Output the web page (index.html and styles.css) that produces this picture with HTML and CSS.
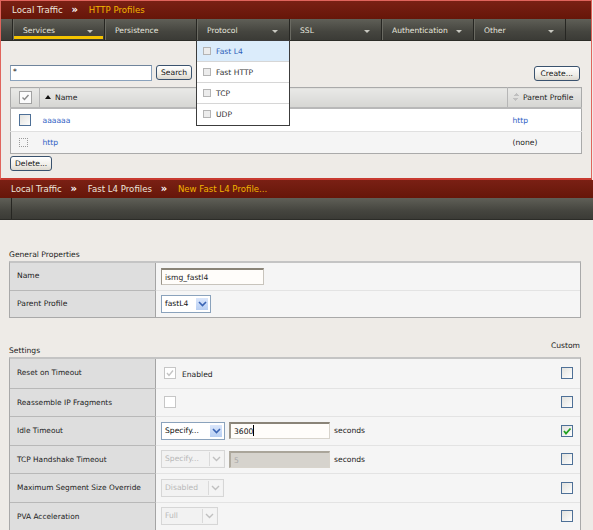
FILE: index.html
```html
<!DOCTYPE html>
<html>
<head>
  <title>Local Traffic - Profiles</title>
  <link rel="stylesheet" href="styles.css">
</head>
<body>
  <div class="screen list-screen">
    <div class="crumbs">Local Traffic <span class="crumb-sep">&raquo;</span> <span class="crumb-current">HTTP Profiles</span></div>
    <div class="tabs">
      <div class="tab-edge"></div>
      <div class="tab active">Services <span class="caret"></span></div>
      <div class="tab">Persistence</div>
      <div class="tab open">Protocol <span class="caret"></span>
        <ul class="menu">
          <li class="menu-item hover"><span class="menu-box"></span>Fast L4</li>
          <li class="menu-item"><span class="menu-box"></span>Fast HTTP</li>
          <li class="menu-item"><span class="menu-box"></span>TCP</li>
          <li class="menu-item"><span class="menu-box"></span>UDP</li>
        </ul>
      </div>
      <div class="tab">SSL <span class="caret"></span></div>
      <div class="tab">Authentication <span class="caret"></span></div>
      <div class="tab">Other <span class="caret"></span></div>
      <div class="tab-fill"></div>
    </div>

    <div class="list-body">
      <div class="toolbar">
        <span class="text-input search-input">*</span>
        <span class="btn">Search</span>
        <span class="spacer"></span>
        <span class="btn">Create...</span>
      </div>
      <table class="grid">
        <thead>
          <tr>
            <th class="col-check"><span class="cb cb-head">
              <svg width="9" height="9" viewBox="0 0 9 9"><polyline points="1.5,4.5 3.5,6.5 7.5,2" fill="none" stroke="#8a8a8a" stroke-width="1.4"/></svg>
            </span></th>
            <th class="col-name"><span class="sort-up"></span>Name</th>
            <th class="col-parent"><span class="sort-both"></span>Parent Profile</th>
          </tr>
        </thead>
        <tbody>
          <tr class="row-white">
            <td class="col-check"><span class="cb"></span></td>
            <td><span class="link">aaaaaa</span></td>
            <td class="col-parent"><span class="link">http</span></td>
          </tr>
          <tr class="row-grey">
            <td class="col-check"><span class="cb-dotted"></span></td>
            <td><span class="link">http</span></td>
            <td class="col-parent">(none)</td>
          </tr>
        </tbody>
      </table>
      <span class="btn">Delete...</span>
    </div>
  </div>

  <div class="screen form-screen">
    <div class="crumbs">Local Traffic <span class="crumb-sep">&raquo;</span> Fast L4 Profiles <span class="crumb-sep">&raquo;</span> <span class="crumb-current">New Fast L4 Profile...</span></div>
    <div class="tabs">
      <div class="tab-edge tab-edge-small"></div>
      <div class="tab-fill"></div>
    </div>

    <div class="form-body">
      <div class="section-title">General Properties</div>
      <div class="props general">
        <div class="prop-row">
          <div class="prop-label">Name</div>
          <div class="prop-value"><span class="text-input name-input">ismg_fastl4</span></div>
        </div>
        <div class="prop-row">
          <div class="prop-label">Parent Profile</div>
          <div class="prop-value">
            <span class="select sel-parent">fastL4<span class="sel-arrow"><svg width="9" height="6" viewBox="0 0 9 6"><polyline points="1,1 4.5,4.5 8,1" fill="none" stroke="#3a64b4" stroke-width="1.6"/></svg></span></span>
          </div>
        </div>
      </div>

      <div class="section-title settings-title">
        <span class="settings-label">Settings</span>
        <span class="custom-label">Custom</span>
      </div>
      <div class="props settings">
        <div class="prop-row">
          <div class="prop-label">Reset on Timeout</div>
          <div class="prop-value">
            <span class="cb cb-disabled"><svg width="10" height="10" viewBox="0 0 10 10"><polyline points="2,5 4,7.5 8,2.5" fill="none" stroke="#c4c4c4" stroke-width="1.4"/></svg></span>
            <span class="value-text">Enabled</span>
            <span class="cb cb-custom"></span>
          </div>
        </div>
        <div class="prop-row">
          <div class="prop-label">Reassemble IP Fragments</div>
          <div class="prop-value">
            <span class="cb cb-plain"></span>
            <span class="cb cb-custom"></span>
          </div>
        </div>
        <div class="prop-row">
          <div class="prop-label">Idle Timeout</div>
          <div class="prop-value">
            <span class="select sel-specify">Specify...<span class="sel-arrow"><svg width="9" height="6" viewBox="0 0 9 6"><polyline points="1,1 4.5,4.5 8,1" fill="none" stroke="#3a64b4" stroke-width="1.6"/></svg></span></span>
            <span class="text-input timeout-input">3600<span class="cursor"></span></span>
            <span class="value-text">seconds</span>
            <span class="cb cb-custom"><svg width="10" height="10" viewBox="0 0 10 10"><polyline points="2,5 4,7.5 8.5,2.5" fill="none" stroke="#21a121" stroke-width="1.8"/></svg></span>
          </div>
        </div>
        <div class="prop-row">
          <div class="prop-label">TCP Handshake Timeout</div>
          <div class="prop-value">
            <span class="select sel-specify disabled">Specify...<span class="sel-arrow"><svg width="9" height="6" viewBox="0 0 9 6"><polyline points="1,1 4.5,4.5 8,1" fill="none" stroke="#c0c0c0" stroke-width="1.4"/></svg></span></span>
            <span class="text-input timeout-input disabled">5</span>
            <span class="value-text">seconds</span>
            <span class="cb cb-custom"></span>
          </div>
        </div>
        <div class="prop-row">
          <div class="prop-label">Maximum Segment Size Override</div>
          <div class="prop-value">
            <span class="select sel-mss disabled">Disabled<span class="sel-arrow"><svg width="9" height="6" viewBox="0 0 9 6"><polyline points="1,1 4.5,4.5 8,1" fill="none" stroke="#c0c0c0" stroke-width="1.4"/></svg></span></span>
            <span class="cb cb-custom"></span>
          </div>
        </div>
        <div class="prop-row">
          <div class="prop-label">PVA Acceleration</div>
          <div class="prop-value">
            <span class="select sel-pva disabled">Full<span class="sel-arrow"><svg width="9" height="6" viewBox="0 0 9 6"><polyline points="1,1 4.5,4.5 8,1" fill="none" stroke="#c0c0c0" stroke-width="1.4"/></svg></span></span>
            <span class="cb cb-custom"></span>
          </div>
        </div>
      </div>
    </div>
  </div>
</body>
</html>
```

FILE: styles.css
```css
body {
  margin: 0;
  width: 593px;
  background-color: #eeebe7;
  font-family: "DejaVu Sans", Verdana, sans-serif;
  font-size: 7.6px;
  color: #222;
}

.screen {
  box-sizing: border-box;
}

.list-screen {
  height: 180px;
  width: 592px;
  border: 1px solid #e0645c;
  border-bottom: 2px solid #c83a30;
}

/* breadcrumb bar */
.crumbs {
  height: 18px;
  line-height: 18px;
  padding-left: 11px;
  background: linear-gradient(#7a2014, #661609);
  color: #eee6dc;
  font-size: 8.6px;
  white-space: nowrap;
}

.crumb-sep {
  display: inline-block;
  color: #fff;
  font-size: 10px;
  font-weight: bold;
  margin: 0 8px 0 6px;
}

.crumb-current {
  color: #f2b400;
}

/* tab bar */
.tabs {
  display: flex;
  height: 22px;
  background: linear-gradient(#5f5f57, #45453f 60%, #3b3b36);
  border-bottom: 1px solid #2c2c28;
  box-sizing: border-box;
}

.tab-edge {
  width: 11px;
}

.tab {
  position: relative;
  width: 92px;
  border-left: 1px solid #262622;
  box-shadow: inset 1px 0 0 #6a6a62;
  padding: 2px 0 0 10px;
  box-sizing: border-box;
  color: #e6e6de;
  line-height: 19px;
  white-space: nowrap;
}

.tab.active::after {
  content: "";
  position: absolute;
  left: 1px;
  right: 1px;
  bottom: 1px;
  height: 3px;
  background-color: #f4c300;
}

.tab.open {
  width: 93px;
}

.caret {
  position: absolute;
  right: 11px;
  top: 11px;
  border-left: 3px solid transparent;
  border-right: 3px solid transparent;
  border-top: 3px solid #c8c8c0;
}

.tab-fill {
  flex: 1;
  border-left: 1px solid #262622;
}

/* protocol menu */
.menu {
  position: absolute;
  top: 21px;
  left: -1px;
  width: 94px;
  margin: 0;
  padding: 0;
  list-style: none;
  background-color: #fff;
  border: 1px solid #3c3c3c;
  box-sizing: border-box;
  z-index: 5;
}

.menu-item {
  height: 21px;
  line-height: 21px;
  padding-left: 6px;
  color: #333;
  border-bottom: 1px solid #d6d6d6;
  box-sizing: border-box;
}

.menu-item:last-child {
  border-bottom: none;
}

.menu-item.hover {
  background-color: #dbecfb;
  color: #2f5fb8;
}

.menu-box {
  display: inline-block;
  width: 6px;
  height: 6px;
  border: 1px solid #b4b4b4;
  background-color: #ececec;
  margin-right: 5px;
  vertical-align: -1px;
}

/* list page */
.list-body {
  padding: 24px 9px 0 9px;
}

.toolbar {
  display: flex;
  align-items: flex-start;
  height: 16px;
  margin-bottom: 6px;
}

.spacer {
  flex: 1;
}

.text-input {
  display: inline-block;
  box-sizing: border-box;
  background-color: #fff;
  border: 1px solid #8aa2bc;
  border-top-color: #6f849c;
  white-space: nowrap;
}

.search-input {
  width: 142px;
  height: 16px;
  line-height: 11px;
  padding-left: 2px;
  margin-right: 4px;
}

.btn {
  display: inline-block;
  box-sizing: border-box;
  height: 15px;
  line-height: 13px;
  padding: 0 4px;
  border: 1px solid #3a526e;
  border-radius: 3px;
  background: linear-gradient(#ffffff, #f0eee8 60%, #dcd8cf);
  color: #111;
  white-space: nowrap;
}

.toolbar .btn:last-child {
  margin-top: 1px;
  margin-right: 2px;
  padding: 0 6px;
}

.grid {
  width: 572px;
  border-collapse: collapse;
  border: 1px solid #aaa;
  margin-bottom: 2px;
}

.grid th {
  height: 19px;
  padding: 0;
  font-weight: normal;
  text-align: left;
  color: #222;
  background: linear-gradient(#e9e9e7, #d6d6d3);
  border-bottom: 2px solid #b8b8b8;
}

.grid td {
  padding: 0;
}

.grid .col-check {
  width: 28px;
  text-align: center;
  border-right: 1px solid #b6b6b6;
}

.grid td.col-check {
  border-right: none;
}

.grid .col-name {
  padding-left: 5px;
}

.grid .col-parent {
  width: 68px;
  padding-left: 5px;
}

.grid th.col-parent {
  border-left: 1px solid #b6b6b6;
}

.row-white td {
  height: 22px;
  background-color: #fff;
  border-bottom: 1px solid #e0e0e0;
}

.row-grey td {
  height: 21px;
  background-color: #f5f5f5;
}

.row-white td:nth-child(2),
.row-grey td:nth-child(2) {
  padding-left: 3px;
}

.link {
  color: #3161c4;
}

.sort-up {
  display: inline-block;
  border-left: 3px solid transparent;
  border-right: 3px solid transparent;
  border-bottom: 4px solid #111;
  margin-right: 4px;
  vertical-align: 1px;
}

.sort-both {
  display: inline-block;
  width: 6px;
  height: 8px;
  margin-right: 4px;
  vertical-align: -1px;
  background:
    linear-gradient(to bottom right, transparent 50%, #c0c0c0 50%) 0 0 / 3px 3px no-repeat,
    linear-gradient(to bottom left, transparent 50%, #c0c0c0 50%) 3px 0 / 3px 3px no-repeat,
    linear-gradient(to top right, transparent 50%, #c0c0c0 50%) 0 5px / 3px 3px no-repeat,
    linear-gradient(to top left, transparent 50%, #c0c0c0 50%) 3px 5px / 3px 3px no-repeat;
}

.cb {
  display: inline-block;
  box-sizing: border-box;
  width: 12px;
  height: 12px;
  border: 1px solid #4e7097;
  background: linear-gradient(135deg, #e2e2de, #fdfdfd);
  vertical-align: middle;
  position: relative;
}

.cb svg {
  position: absolute;
  left: 0;
  top: 0;
}

.cb-head {
  width: 13px;
  height: 13px;
  border-color: #a2a2a2;
  background: #fbfbfb;
}

.cb-head svg {
  left: 1px;
  top: 1px;
}

.cb-dotted {
  display: inline-block;
  width: 7px;
  height: 7px;
  border: 1px dotted #9a9a9a;
  vertical-align: middle;
  margin-left: -3px;
}

/* form page */
.form-screen {
  height: 350px;
}

.form-body {
  padding: 29px 12px 0 9px;
}

.section-title {
  height: 12px;
  line-height: 12px;
  color: #222;
}

.settings-title {
  display: flex;
  justify-content: space-between;
  align-items: flex-end;
  height: 16px;
  margin-top: 23px;
}

.settings-label {
  line-height: 12px;
}

.custom-label {
  line-height: 10px;
  margin-bottom: 6px;
  margin-right: 1px;
}

.props {
  border: 1px solid #a9a9a9;
  border-top: 2px solid #c4c4c4;
  background-color: #f5f5f5;
}

.prop-row {
  display: flex;
  height: 27px;
  box-sizing: border-box;
}

.prop-row + .prop-row {
  border-top: 1px solid #e3e3e3;
}

.prop-label {
  width: 146px;
  box-sizing: border-box;
  padding-left: 7px;
  line-height: 26px;
  background-color: #dedede;
  border-right: 1px solid #a4a4a4;
  white-space: nowrap;
}

.prop-row + .prop-row .prop-label {
  box-shadow: 0 -1px 0 #b8b8b8;
}

.prop-value {
  flex: 1;
  display: flex;
  align-items: center;
  padding-left: 5px;
  white-space: nowrap;
}

.settings .prop-row {
  height: 28.5px;
}

.settings .prop-label {
  line-height: 28px;
  font-size: 7.4px;
}

.name-input {
  width: 103px;
  height: 17px;
  line-height: 15px;
  padding-left: 3px;
  border: 1px solid #c8c4bc;
  border-top: 2px solid #8a8478;
  border-left-color: #9a9488;
  background-color: #fffdfa;
}

.select {
  position: relative;
  display: inline-block;
  box-sizing: border-box;
  height: 18px;
  line-height: 16px;
  padding-left: 3px;
  border: 1px solid #8aa2bc;
  background-color: #fff;
  color: #111;
}

.sel-arrow {
  position: absolute;
  top: 1px;
  right: 1px;
  width: 14px;
  height: 14px;
  background: linear-gradient(#dae6fb, #b8cff3);
  border: 1px solid #fff;
  box-sizing: border-box;
  display: flex;
  align-items: center;
  justify-content: center;
}

.sel-parent {
  width: 50px;
}

.sel-specify {
  width: 64px;
}

.sel-mss {
  width: 63px;
}

.sel-pva {
  width: 57px;
}

.select.disabled {
  color: #b8b8b8;
  border-color: #d6d6d6;
  background-color: #f2f2f2;
}

.select.disabled .sel-arrow {
  background: #f4f4f4;
  border: none;
  border-left: 1px solid #dadada;
}

.timeout-input {
  width: 101px;
  height: 17px;
  line-height: 15px;
  margin-left: 4px;
  padding-left: 3px;
  border: 1px solid #d8d4cc;
  border-top: 2px solid #8a8478;
  border-left: 2px solid #9a9488;
  background-color: #fffdfa;
  color: #111;
}

.timeout-input.disabled {
  background-color: #d6d3cd;
  color: #a8a8a8;
  border-top-color: #aaa59a;
  border-left-color: #b0aba0;
}

.cursor {
  display: inline-block;
  width: 1px;
  height: 11px;
  background-color: #000;
  vertical-align: -2px;
}

.value-text {
  margin-left: 4px;
}

.prop-value .cb-plain,
.prop-value .cb-disabled {
  margin-left: 3px;
  border-color: #c6c6c6;
  background: #fff;
}

.prop-value .cb-disabled + .value-text {
  margin-left: 6px;
  margin-top: 3px;
}

.cb-custom {
  margin-left: auto;
  margin-right: 7px;
}
```
